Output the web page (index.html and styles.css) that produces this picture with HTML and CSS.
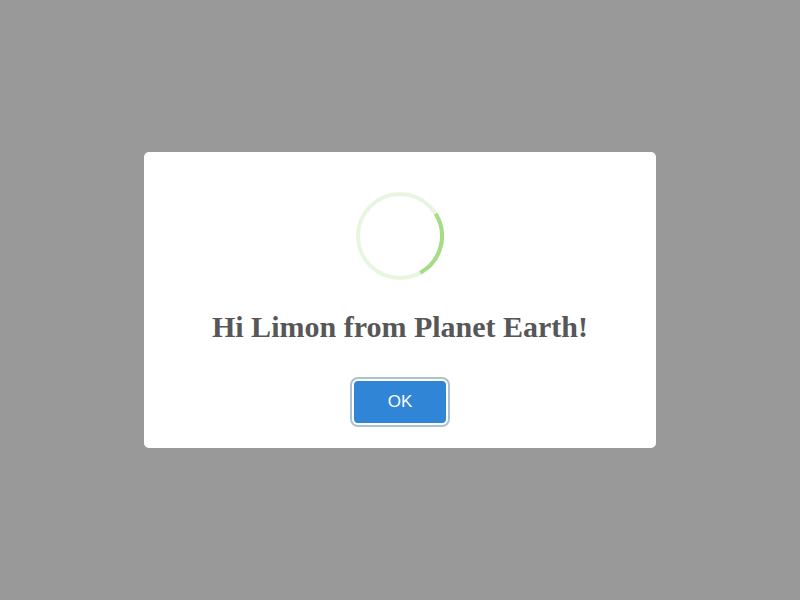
FILE: index.html
```html
<!DOCTYPE html>
<html>
<head>
<meta charset="utf-8">
<link rel="stylesheet" href="styles.css">
</head>
<body>
<div class="overlay">
  <div class="modal">
    <svg class="icon" width="88" height="88" viewBox="0 0 88 88">
      <circle cx="44" cy="44" r="42" fill="none" stroke="rgba(165,220,134,0.25)" stroke-width="4"/>
      <path d="M79.62 21.74 A42 42 0 0 1 64.36 80.73" fill="none" stroke="#a5dc86" stroke-width="4"/>
    </svg>
    <h2 class="title">Hi Limon from Planet Earth!</h2>
    <button class="confirm">OK</button>
  </div>
</div>
</body>
</html>
```
FILE: styles.css
```css
html, body {
  margin: 0;
  padding: 0;
  height: 100%;
}
.overlay {
  width: 800px;
  height: 600px;
  background: #999999;
  display: flex;
  align-items: center;
  justify-content: center;
}
.modal {
  width: 512px;
  height: 296px;
  box-sizing: border-box;
  background: #fff;
  border-radius: 5px;
  padding-top: 40px;
  display: flex;
  flex-direction: column;
  align-items: center;
}
.icon {
  display: block;
  width: 88px;
  height: 88px;
}
.title {
  margin: 29px 0 0;
  font-family: "Liberation Serif", serif;
  font-weight: bold;
  font-size: 30px;
  line-height: 36px;
  color: #575757;
  text-align: center;
}
.confirm {
  margin-top: 36px;
  width: 92px;
  height: 42px;
  border: none;
  border-radius: 4px;
  background: #3085d6;
  color: #fff;
  font-family: "Liberation Sans", Arial, sans-serif;
  font-size: 17px;
  padding: 0;
  box-shadow: 0 0 0 2px #fff, 0 0 0 4px rgba(50, 100, 150, 0.4);
  outline: none;
}
```
